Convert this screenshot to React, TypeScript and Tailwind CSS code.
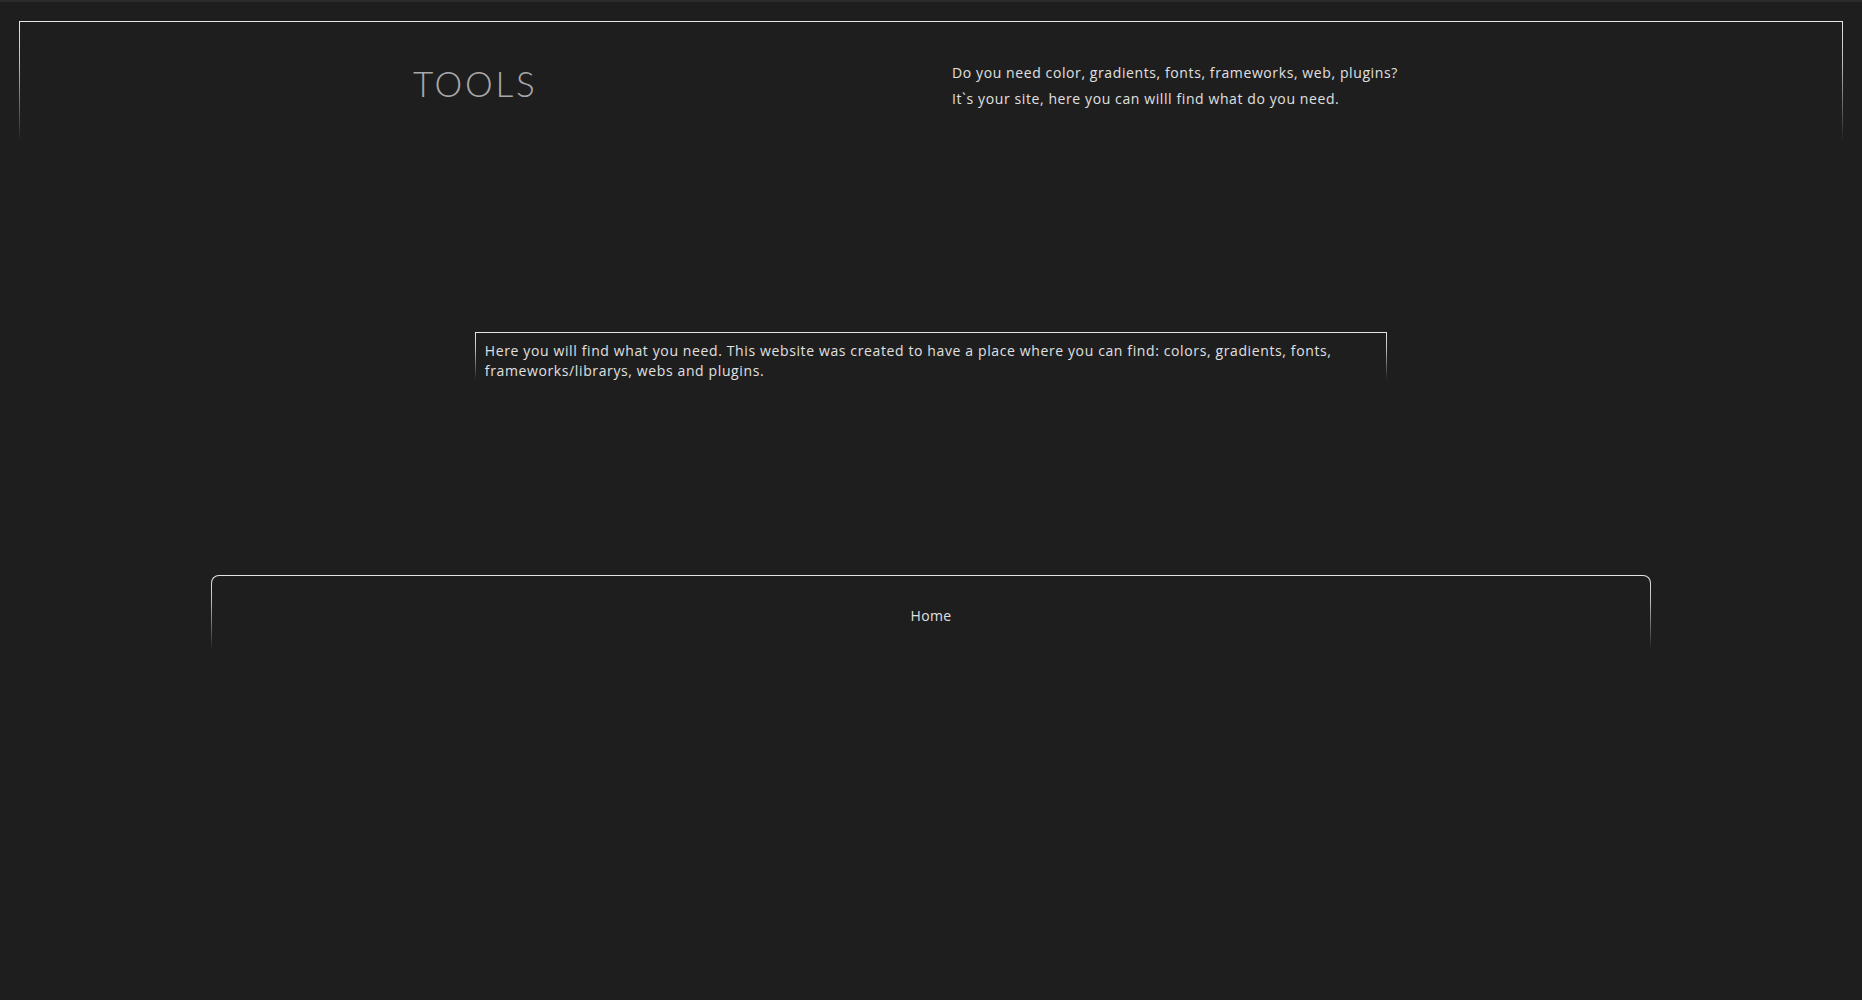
import React from "react";

const sans = "font-['Open_Sans','Noto_Sans',sans-serif]";

// 1px frame: white top edge, sides fade out to nothing at the bottom
const FadeFrame = ({
	className = "",
	inner = "",
	children,
}: {
	className?: string;
	inner?: string;
	children: React.ReactNode;
}) => (
	<div className={`bg-[linear-gradient(to_bottom,#e6e6e6_0%,#bdbdbd_35%,rgba(30,30,30,0)_100%)] px-px pt-px ${className}`}>
		<div className={`bg-[#1e1e1e] ${inner}`}>{children}</div>
	</div>
);

export default function App() {
	return (
		<div className={`min-h-screen bg-[#1e1e1e] text-[#e0e0e0] ${sans}`}>
			<div className="h-[2px] bg-[#2b2b2b]" />

			{/* Header */}
			<FadeFrame className="mx-auto mt-[19px] w-[98%]" inner="h-[120px]">
				<div className="grid h-full grid-cols-2">
					<div className="flex justify-center pt-[40px]">
						<h1 className="font-['Lato',sans-serif] text-[35px] font-light leading-[1.2] tracking-[0.08em] text-[#a8a8a8]">
							TOOLS
						</h1>
					</div>
					<div className="pl-[21px] pt-[38px] text-[14px] leading-[26px] tracking-[0.6px]">
						<p>Do you need color, gradients, fonts, frameworks, web, plugins?</p>
						<p>It`s your site, here you can willl find what do you need.</p>
					</div>
				</div>
			</FadeFrame>

			{/* Intro */}
			<FadeFrame className="mx-auto mt-[190px] w-[49%]" inner="h-[47px]">
				<p className="px-[9px] pt-[8px] text-[14px] leading-[20px] tracking-[0.62px]">
					Here you will find what you need. This website was created to have a place where you can find: colors, gradients, fonts, frameworks/librarys, webs and plugins.
				</p>
			</FadeFrame>

			{/* Nav */}
			<FadeFrame className="mx-auto mt-[195px] w-[1440px] rounded-t-lg" inner="h-[74px] rounded-t-[7px]">
				<nav className="flex justify-center pt-[30px]">
					<a href="#" className="text-[14px] leading-[20px] tracking-[0.3px] text-[#e0e0e0]">
						Home
					</a>
				</nav>
			</FadeFrame>
		</div>
	);
}
